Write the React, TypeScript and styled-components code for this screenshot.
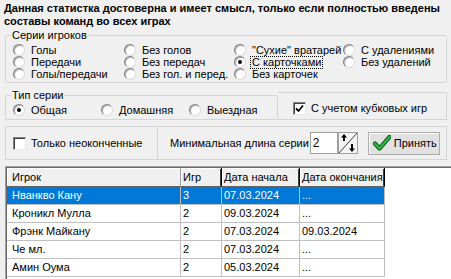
import React from "react";
import styled, { createGlobalStyle } from "styled-components";

const GlobalStyle = createGlobalStyle`
  html, body { margin: 0; padding: 0; background: #f0f0f0; }
  body { font-family: "Liberation Sans", Arial, sans-serif; font-size: 11px; color: #000; }
  * { box-sizing: border-box; }
`;

const Window = styled.div`
  width: 451px;
  height: 279px;
  overflow: hidden;
  background: #f0f0f0;
  display: flex;
  flex-direction: column;
  padding: 0 4px 0 5px;
`;

const Title = styled.div`
  margin: 2px 0 0 -1px;
  font-weight: bold;
  font-size: 11px;
  line-height: 13px;
  white-space: nowrap;
`;

const GroupBox = styled.fieldset<{ $width?: number; $top?: number }>`
  margin: ${(p) => p.$top ?? 0}px 0 0 0;
  padding: 3px 0 2px 5px;
  border: 1px solid #d5d5d5;
  border-radius: 2px;
  min-width: 0;
  ${(p) => (p.$width ? `width: ${p.$width}px; flex: none;` : "")}
`;

const Legend = styled.legend`
  padding: 0 1px;
  line-height: 12px;
  font-size: 11px;
`;

const RadioGrid = styled.div<{ $cols: string; $rows: number; $padBottom?: number }>`
  display: grid;
  grid-template-columns: ${(p) => p.$cols};
  grid-template-rows: repeat(${(p) => p.$rows}, 12px);
  grid-auto-flow: column;
  padding-left: 2px;
  padding-bottom: ${(p) => p.$padBottom ?? 0}px;
`;

const Option = styled.label`
  display: flex;
  align-items: center;
  gap: 6px;
  white-space: nowrap;
  height: 12px;
  line-height: 12px;
`;

const RadioMark = styled.span<{ $checked?: boolean }>`
  position: relative;
  flex: none;
  width: 12px;
  height: 12px;
  border-radius: 50%;
  border: 1px solid;
  border-color: #7f7f7f #dcdcdc #dcdcdc #7f7f7f;
  background: radial-gradient(circle at 60% 60%, #ffffff 0 45%, #e4e4e4 100%);
  box-shadow: inset 1px 1px 0 #b4b4b4;
  &::after {
    content: "";
    display: ${(p) => (p.$checked ? "block" : "none")};
    position: absolute;
    left: 3px;
    top: 3px;
    width: 4px;
    height: 4px;
    border-radius: 50%;
    background: #000;
  }
`;

const OptionText = styled.span<{ $focused?: boolean }>`
  padding: 0 1px;
  margin-left: -1px;
  line-height: 11px;
  outline: ${(p) => (p.$focused ? "1px dotted #000" : "none")};
`;

const Row = styled.div`
  display: flex;
  align-items: stretch;
  margin-top: 6px;
`;

const CheckPanel = styled.div`
  flex: 1;
  margin-top: 3px;
  border: 1px solid #d5d5d5;
  border-left: none;
  display: flex;
  align-items: flex-start;
  padding: 9px 0 0 15px;
`;

const CheckOption = styled.label`
  display: flex;
  align-items: center;
  gap: 5px;
  white-space: nowrap;
  line-height: 13px;
`;

const CheckMark = styled.span`
  flex: none;
  width: 13px;
  height: 13px;
  border: 1px solid;
  border-color: #808080 #e8e8e8 #e8e8e8 #808080;
  box-shadow: inset 1px 1px 0 #404040;
  background: #fff;
  display: flex;
  align-items: center;
  justify-content: center;
`;

const FilterPanel = styled.div`
  margin-top: 6px;
  height: 34px;
  border: 1px solid #d5d5d5;
  display: flex;
`;

const FilterLeft = styled.div`
  width: 151px;
  flex: none;
  display: flex;
  align-items: center;
  padding: 1px 0 0 7px;
`;

const FilterRight = styled.div`
  flex: 1;
  border-left: 1px solid #d5d5d5;
  display: flex;
  align-items: center;
  padding-left: 12px;
`;

const FieldLabel = styled.span`
  white-space: nowrap;
  margin-right: 1px;
`;

const NumberBox = styled.div`
  width: 28px;
  height: 22px;
  background: #fff;
  border: 1px solid #a0a0a0;
  font-size: 12px;
  line-height: 20px;
  padding-left: 2px;
`;

const SpinBox = styled.div`
  width: 20px;
  height: 22px;
  flex: none;
  margin-right: 10px;
  display: flex;
`;

const AcceptButton = styled.button`
  width: 72px;
  height: 23px;
  display: flex;
  align-items: center;
  gap: 3px;
  padding: 0 0 0 4px;
  border: 1px solid #adadad;
  background: #e1e1e1;
  box-shadow: inset 1px 1px 0 #fdfdfd;
  font: inherit;
  font-size: 11px;
  color: #000;
`;

const Grid = styled.div`
  margin: 6px -4px 0 0;
  flex: 1;
  background: #fff;
  border-top: 1px solid #a0a0a0;
  border-left: 1px solid #a0a0a0;
  padding: 1px 0 0 1px;
  box-shadow: inset 1px 1px 0 #696969;
`;

const GridRow = styled.div`
  display: grid;
  grid-template-columns: 174px 41px 78px 85px;
`;

const HeadCell = styled.div<{ $dark?: boolean; $pad?: number }>`
  height: 19px;
  line-height: 18px;
  padding-left: ${(p) => p.$pad ?? 2}px;
  background: #f0f0f0;
  border-bottom: 1px solid #646464;
  border-right: 1px solid ${(p) => (p.$dark ? "#000" : "#a0a0a0")};
  box-shadow: inset 1px 1px 0 #fff ${(p) => (p.$dark ? ", inset -1px 0 0 #404040" : "")};
  white-space: nowrap;
  overflow: hidden;
`;

const Cell = styled.div<{ $selected?: boolean; $pad?: number }>`
  height: 18px;
  line-height: 17px;
  padding-left: ${(p) => p.$pad ?? 2}px;
  border-right: 1px solid #c0c0c0;
  border-bottom: 1px solid #c0c0c0;
  background: ${(p) => (p.$selected ? "#0078d7" : "#fff")};
  color: ${(p) => (p.$selected ? "#fff" : "#000")};
  white-space: nowrap;
  overflow: hidden;
`;

const Radio = ({ label, checked, focused }: { label: string; checked?: boolean; focused?: boolean }) => (
  <Option>
    <RadioMark $checked={checked} />
    <OptionText $focused={focused}>{label}</OptionText>
  </Option>
);

const Check = ({ label, checked }: { label: string; checked?: boolean }) => (
  <CheckOption>
    <CheckMark>
      {checked && (
        <svg width="9" height="9" viewBox="0 0 9 9">
          <path d="M1 4.5 L3.5 7 L8 1.5" fill="none" stroke="#000" strokeWidth="1.8" />
        </svg>
      )}
    </CheckMark>
    <span>{label}</span>
  </CheckOption>
);

const SpinIcon = () => (
  <svg width="20" height="22" viewBox="0 0 20 22">
    <rect x="0.5" y="0.5" width="19" height="21" fill="#f4f4f4" stroke="#a0a0a0" />
    <path d="M1 21 L19 1" stroke="#404040" strokeWidth="1" />
    <path d="M6 2 L3 5.5 L9 5.5 Z" fill="#000" />
    <rect x="5" y="5" width="2" height="4" fill="#000" />
    <rect x="13" y="12" width="2" height="5" fill="#000" />
    <path d="M14 20 L11 16.5 L17 16.5 Z" fill="#000" />
  </svg>
);

const AcceptIcon = () => (
  <svg width="18" height="16" viewBox="0 0 18 16">
    <path d="M2 8.5 L6.5 13.5 L16.5 2" fill="none" stroke="#0b5d1e" strokeWidth="4.2" strokeLinejoin="round" strokeLinecap="round" />
    <path d="M2 8.5 L6.5 13.5 L16.5 2" fill="none" stroke="#32b642" strokeWidth="2.2" strokeLinejoin="round" strokeLinecap="round" />
  </svg>
);

const rows = [
  ["Нванкво Кану", "3", "07.03.2024", "..."],
  ["Кроникл Мулла", "2", "09.03.2024", "..."],
  ["Фрэнк Майкану", "2", "07.03.2024", "09.03.2024"],
  ["Че мл.", "2", "07.03.2024", "..."],
  ["Амин Оума", "2", "05.03.2024", "..."],
];

export default function App() {
  return (
    <Window>
      <GlobalStyle />
      <Title>
        Данная статистка достоверна и имеет смысл, только если полностью введены
        <br />
        составы команд во всех играх
      </Title>

      <GroupBox $top={1}>
        <Legend>Серии игроков</Legend>
        <RadioGrid $cols="111px 110px 109px auto" $rows={3}>
          <Radio label="Голы" />
          <Radio label="Передачи" />
          <Radio label="Голы/передачи" />
          <Radio label="Без голов" />
          <Radio label="Без передач" />
          <Radio label="Без гол. и перед." />
          <Radio label={'"Сухие" вратарей'} />
          <Radio label="С карточками" checked focused />
          <Radio label="Без карточек" />
          <Radio label="С удалениями" />
          <Radio label="Без удалений" />
        </RadioGrid>
      </GroupBox>

      <Row>
        <GroupBox $width={273}>
          <Legend>Тип серии</Legend>
          <RadioGrid $cols="88px 88px auto" $rows={1} $padBottom={1}>
            <Radio label="Общая" checked />
            <Radio label="Домашняя" />
            <Radio label="Выездная" />
          </RadioGrid>
        </GroupBox>
        <CheckPanel>
          <Check label="С учетом кубковых игр" checked />
        </CheckPanel>
      </Row>

      <FilterPanel>
        <FilterLeft>
          <Check label="Только неоконченные" />
        </FilterLeft>
        <FilterRight>
          <FieldLabel>Минимальная длина серии</FieldLabel>
          <NumberBox>2</NumberBox>
          <SpinBox>
            <SpinIcon />
          </SpinBox>
          <AcceptButton>
            <AcceptIcon />
            Принять
          </AcceptButton>
        </FilterRight>
      </FilterPanel>

      <Grid>
        <GridRow>
          <HeadCell $pad={5}>Игрок</HeadCell>
          <HeadCell $dark>Игр</HeadCell>
          <HeadCell $dark>Дата начала</HeadCell>
          <HeadCell $dark>Дата окончания</HeadCell>
        </GridRow>
        {rows.map((r, i) => (
          <GridRow key={i}>
            {r.map((c, j) => (
              <Cell key={j} $selected={i === 0} $pad={j === 0 ? 5 : 2}>
                {c}
              </Cell>
            ))}
          </GridRow>
        ))}
      </Grid>
    </Window>
  );
}
